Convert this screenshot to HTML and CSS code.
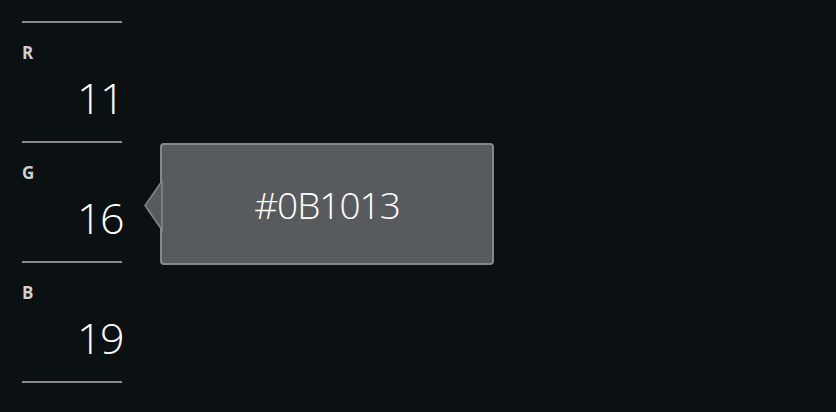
FILE: index.html
```html
<!DOCTYPE html>
<html>
<head>
<meta charset="utf-8">
<link rel="stylesheet" href="styles.css">
</head>
<body>
<div class="page">
  <div class="channels">
    <div class="channel">
      <div class="label">R</div>
      <div class="value">11</div>
    </div>
    <div class="channel">
      <div class="label">G</div>
      <div class="value">16</div>
    </div>
    <div class="channel">
      <div class="label">B</div>
      <div class="value">19</div>
    </div>
    <div class="rule"></div>
  </div>
  <div class="tooltip">
    <svg class="arrow" width="20" height="52" viewBox="0 0 20 52">
      <polygon points="19,0 2,24.5 19,49" fill="#585b5e" stroke="#85888a" stroke-width="1.5"/>
    </svg>
    <span class="hex">#0B1013</span>
  </div>
</div>
</body>
</html>
```

FILE: styles.css
```css
html, body {
  margin: 0;
  padding: 0;
  background: #0b1013;
  width: 836px;
  height: 412px;
  overflow: hidden;
}
.page {
  position: relative;
  width: 836px;
  height: 412px;
  padding: 21px 0 0 22px;
  box-sizing: border-box;
  font-family: "Open Sans", "Noto Sans", sans-serif;
}
.channels {
  width: 100px;
  display: flex;
  flex-direction: column;
}
.channel {
  height: 118px;
  border-top: 2px solid #8a8a8a;
  display: flex;
  flex-direction: column;
}
.rule {
  height: 2px;
  background: #8a8a8a;
}
.label {
  margin-top: 19px;
  font-size: 17px;
  font-weight: 700;
  line-height: 22px;
  color: #d0d0d0;
}
.value {
  text-align: right;
  font-size: 43px;
  font-weight: 300;
  letter-spacing: -1.5px;
  line-height: 50px;
  color: #ffffff;
  margin-top: 9px;
  margin-right: -1px;
}
.tooltip {
  position: absolute;
  left: 160px;
  top: 143px;
  width: 334px;
  height: 122px;
  box-sizing: border-box;
  background: #585b5e;
  border: 2px solid #85888a;
  border-radius: 4px;
  display: flex;
  align-items: center;
  justify-content: center;
}
.arrow {
  position: absolute;
  left: -19px;
  top: 36px;
}
.hex {
  font-size: 37px;
  font-weight: 300;
  letter-spacing: -1px;
  color: #ffffff;
  margin-top: 0;
}
```
